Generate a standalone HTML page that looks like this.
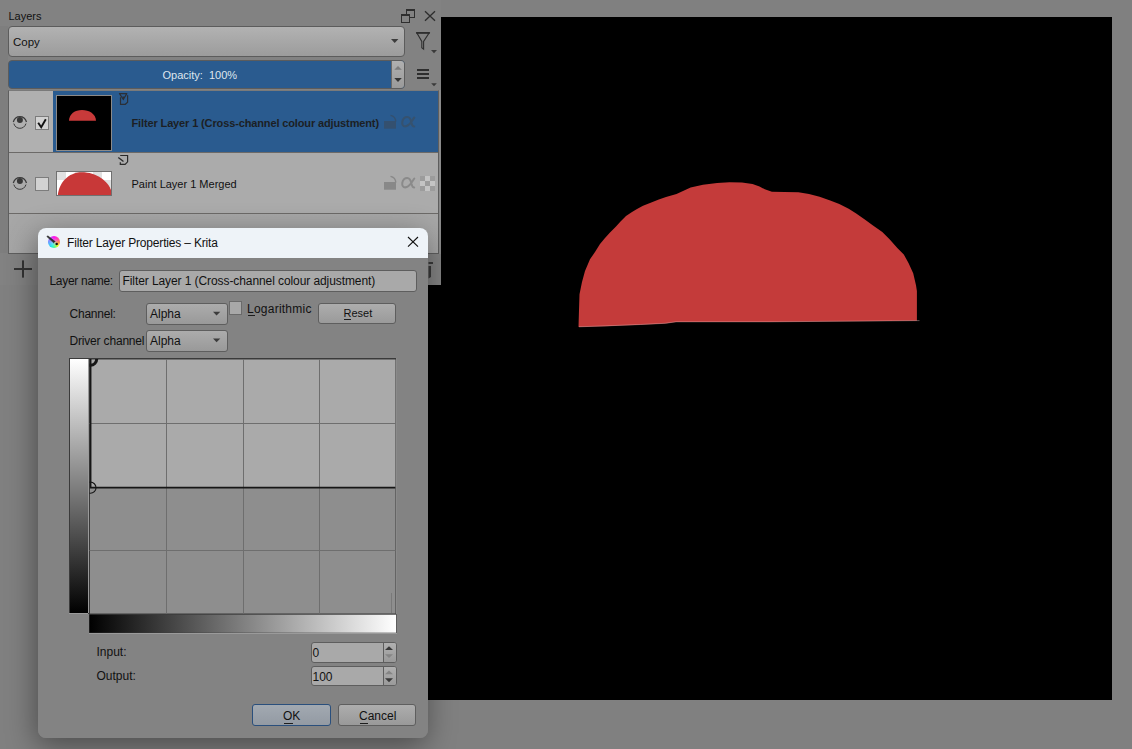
<!DOCTYPE html>
<html><head><meta charset="utf-8">
<style>
*{box-sizing:border-box;margin:0;padding:0}
html,body{width:1132px;height:749px;overflow:hidden;background:#808080;font-family:"Liberation Sans",sans-serif;font-size:12px;color:#111;position:relative}
.a{position:absolute}
.t{position:absolute;line-height:1;white-space:pre}
.s11{font-size:11px}
svg{position:absolute;overflow:visible}
</style></head><body>
<!-- canvas -->
<div class="a" style="left:420px;top:17px;width:692px;height:683px;background:#000"></div>
<svg style="left:0;top:0" width="1132" height="749" viewBox="0 0 1132 749">
<path fill="#c43b3a" d="M578.5,327.1 L579,310 L579.5,294.2 L582,282 L585,271 L590,259.2 L595,252.1 L600,244.1 L605,238.1 L610,232.5 L616,226.5 L621,221.1 L626,216.1 L632,212.1 L637,209.1 L643,205.7 L650,203 L658.8,199.4 L666,197 L676.5,194.1 L690.6,187.5 L703,184.7 L717.1,183 L729.5,182.2 L741.9,182.6 L752.5,184 L759.5,186.5 L764.8,189.3 L771.9,191.8 L784.3,192 L798.4,192.3 L809,194.1 L819.6,196.7 L830.2,200.6 L839.3,204 L848.7,208.7 L856.2,213.4 L865.5,219.9 L873,225.5 L882.3,232.1 L889.8,239.5 L897.3,247.9 L903.8,254.5 L908.5,262.9 L913.2,273.2 L916,285.3 L916.9,291 L916.9,320.8 L770,322.1 L676,322.1 L665.4,323.6 L640.7,324.8 L605.3,326.2 Z"/>
<path fill="none" stroke="rgba(235,200,200,.55)" stroke-width=".7" d="M579,326.8 L605.3,325.9 L640.7,324.5 L665.4,323.3 L676,321.8 L770,321.8 L919.5,320.6"/>
</svg>

<!-- ============ LAYERS DOCKER ============ -->
<div class="a" style="left:0;top:0;width:441px;height:285px;background:#828282"></div>
<div class="a" style="left:439px;top:90px;width:2px;height:164px;background:#8a8a8a"></div>
<div class="a" style="left:0;top:26px;width:8px;height:227px;background:#7e7e7e"></div>
<div class="t s11" style="left:8.5px;top:10.7px">Layers</div>
<!-- float / close -->
<svg style="left:0;top:0" width="441" height="60">
 <g fill="none" stroke="#2e2e2e" stroke-width="1">
  <rect x="406.5" y="9.5" width="8" height="8"/>
  <rect x="401.5" y="14.5" width="8" height="8" fill="#828282"/>
 </g>
 <rect x="406" y="9" width="9" height="2" fill="#2e2e2e"/>
 <rect x="401" y="14" width="9" height="2" fill="#2e2e2e"/>
 <path d="M425,11.2 L435,20.8 M435,11.2 L425,20.8" stroke="#2e2e2e" stroke-width="1.3"/>
 <!-- funnel -->
 <path d="M416.8,32.8 L429.2,32.8 L423.6,41.5 L423.6,49.2 L421.8,47.8 L421.8,41.5 Z" fill="none" stroke="#2e2e2e" stroke-width="1.1" stroke-linejoin="miter"/>
 <rect x="416.2" y="32" width="13.6" height="1.8" fill="#2e2e2e"/>
 <path d="M431,50 L437,50 L434,53.3 Z" fill="#3a3a3a"/>
</svg>
<!-- composite combobox -->
<div class="a" style="left:8px;top:26px;width:397px;height:31px;border:1px solid #5c5c5c;border-radius:4px;background:linear-gradient(#b2b2b2,#9c9c9c)"></div>
<div class="t" style="left:13px;top:37px;font-size:11.5px">Copy</div>
<svg style="left:0;top:0" width="441" height="60"><path d="M391,39 L398.4,39 L394.7,43 Z" fill="#3c3c3c"/></svg>
<!-- opacity slider -->
<div class="a" style="left:8px;top:60px;width:397px;height:29px;border:1px solid #5c5c5c;border-radius:4px;background:#2a5b8f;overflow:hidden">
  <div class="a" style="left:382px;top:0;width:14px;height:27px;background:linear-gradient(#b0b0b0,#9a9a9a);border-left:1px solid #6a6a6a"></div>
</div>
<div class="t s11" style="left:162.5px;top:69.7px;color:#dfe6ee">Opacity:  100%</div>
<svg style="left:0;top:0" width="441" height="100">
 <path d="M394.3,69.7 L401.8,69.7 L398,66 Z" fill="#7c7c7c"/>
 <path d="M394.3,78 L401.8,78 L398,82 Z" fill="#353535"/>
 <rect x="417" y="69" width="12" height="2" fill="#2e2e2e"/>
 <rect x="417" y="73" width="12" height="2" fill="#2e2e2e"/>
 <rect x="417" y="77" width="12" height="2" fill="#2e2e2e"/>
 <path d="M431.2,83.2 L436.8,83.2 L434,86.3 Z" fill="#3a3a3a"/>
</svg>
<!-- layer list -->
<div class="a" style="left:8px;top:90px;width:431px;height:164px;border:1px solid #5e5e5e;border-top-color:#7a7a7a;background:#aaaaaa"></div>
<div class="a" style="left:9px;top:91px;width:429px;height:162px;background:linear-gradient(#ababab,#a6a6a6)"></div>
<!-- row 1 -->
<div class="a" style="left:9px;top:91px;width:44px;height:61px;background:#b0b0b0"></div>
<div class="a" style="left:53px;top:91px;width:385px;height:61px;background:#2a5b8f"></div>
<div class="a" style="left:9px;top:152px;width:429px;height:1px;background:#6c6a68"></div>
<!-- row 2 -->
<div class="a" style="left:9px;top:153px;width:429px;height:60px;background:#ababab"></div>
<div class="a" style="left:9px;top:213px;width:429px;height:1px;background:#6c6a68"></div>
<!-- eye icons -->
<svg style="left:0;top:0" width="441" height="260">
 <g><path d="M13.3,122 C14.5,118 17,116.6 19.9,116.6 C22.8,116.6 25.3,118 26.5,122" fill="none" stroke="#3a3a3a" stroke-width="1.25"/>
  <circle cx="19.9" cy="120" r="3" fill="#383838"/>
  <path d="M13.8,123.6 C15,127 17.3,128.3 19.9,128.3 C22.5,128.3 24.8,127 26,123.6" fill="none" stroke="#3a3a3a" stroke-width="1"/></g>
 <g transform="translate(0,61)"><path d="M13.3,122 C14.5,118 17,116.6 19.9,116.6 C22.8,116.6 25.3,118 26.5,122" fill="none" stroke="#3a3a3a" stroke-width="1.25"/>
  <circle cx="19.9" cy="120" r="3" fill="#383838"/>
  <path d="M13.8,123.6 C15,127 17.3,128.3 19.9,128.3 C22.5,128.3 24.8,127 26,123.6" fill="none" stroke="#3a3a3a" stroke-width="1"/></g>
 <!-- checkboxes -->
 <rect x="35.5" y="116.5" width="13" height="13" fill="#d2d2d2" stroke="#7c7c7c" stroke-width="1"/>
 <path d="M38.2,122.8 L41.2,127.2 L45.8,119.3" fill="none" stroke="#111" stroke-width="1.9" stroke-linejoin="miter"/>
 <rect x="35.5" y="177.5" width="13" height="13" fill="#d2d2d2" stroke="#7c7c7c" stroke-width="1"/>
 <!-- thumbnail 1 -->
 <rect x="56.5" y="95.5" width="55" height="55" fill="#000" stroke="#8c8a88" stroke-width="1"/>
 <path d="M69,120.8 C69,114 75,110 82,110 C89,110 96,114 96,120.8 Z" fill="#c83a3a"/>
 <!-- thumbnail 2 -->
 <rect x="56.5" y="171.5" width="55" height="24" fill="#fff" stroke="#707070" stroke-width="1"/>
 <rect x="57" y="172" width="9" height="8" fill="#e0e0e0"/>
 <rect x="75" y="172" width="9" height="8" fill="#e0e0e0"/>
 <rect x="93" y="172" width="9" height="8" fill="#e0e0e0"/>
 <rect x="66" y="180" width="9" height="8" fill="#e0e0e0"/>
 <rect x="84" y="180" width="9" height="8" fill="#e0e0e0"/>
 <rect x="102" y="180" width="9" height="8" fill="#e0e0e0"/>
 <path d="M57.8,195 C59,183 68,172.2 82,172.2 C96,172.2 108,181 111,190 L111,195 Z" fill="#c83838"/>
 <!-- filter layer icon -->
 <g fill="none" stroke="#2b2f36" stroke-width="1.2">
  <path d="M119.5,93.6 L126.8,93.6 L123.3,99.5 Z" stroke-linejoin="round"/>
  <path d="M120.5,97.2 L120.5,104.3 L125.3,104.3 L127.6,102.3 L127.6,95.3"/>
 </g>
 <path d="M122.3,96.5 L124.3,96.5 L123.3,100.5 Z" fill="#2b2f36"/>
 <!-- paint layer icon -->
 <g fill="none" stroke="#2a2a2a" stroke-width="1.2">
  <path d="M120.2,155.5 L127.6,155.5 L127.6,161.8 L125.1,164.3 L120.3,164.3 L120.3,162.2"/>
  <path d="M118.3,157.4 L123.5,161.5" stroke-width="1.3"/>
 </g>
 <!-- row1 lock/alpha (dimmed on blue) -->
 <g fill="#34506f">
  <rect x="384" y="121" width="12" height="7.7"/>
  <path d="M390.5,115.4 C393.5,116 395.6,118 395.8,121.5" fill="none" stroke="#34506f" stroke-width="1.4"/>
 </g>
 <path d="M414.3,117.5 C412,120.5 410.5,125 406,126.3 C403,126.8 401.8,124.5 402.3,121.8 C402.8,119 404.8,117 407.3,117 C410.5,117 411,121 411.5,123 C412,125 412.8,126.5 414.2,126.5" fill="none" stroke="#36526f" stroke-width="2.1" stroke-linecap="round"/>
 <!-- row2 lock/alpha/checker -->
 <g fill="#888">
  <rect x="384" y="182" width="12" height="7.7"/>
  <path d="M390.5,176.4 C393.5,177 395.6,179 395.8,182.5" fill="none" stroke="#888" stroke-width="1.4"/>
 </g>
 <path d="M414.3,178.5 C412,181.5 410.5,186 406,187.3 C403,187.8 401.8,185.5 402.3,182.8 C402.8,180 404.8,178 407.3,178 C410.5,178 411,182 411.5,184 C412,186 412.8,187.5 414.2,187.5" fill="none" stroke="#8a8a8a" stroke-width="2" stroke-linecap="round"/>
 <g>
  <rect x="420" y="176" width="15" height="15" fill="#c4c4c4"/>
  <rect x="420" y="176" width="5" height="5" fill="#9c9c9c"/>
  <rect x="430" y="176" width="5" height="5" fill="#9c9c9c"/>
  <rect x="425" y="181" width="5" height="5" fill="#9c9c9c"/>
  <rect x="420" y="186" width="5" height="5" fill="#9c9c9c"/>
  <rect x="430" y="186" width="5" height="5" fill="#9c9c9c"/>
 </g>
 <!-- footer + -->
 <rect x="22" y="260.4" width="2" height="17.2" fill="#333"/>
 <rect x="14" y="268" width="18" height="2" fill="#333"/>
 <!-- footer right partial icon -->
 <rect x="428.5" y="262" width="4.5" height="2" fill="#3a3a3a"/>
 <path d="M428.5,266 L431,266 L431,277 L428.5,278.6 Z" fill="#3a3a3a"/>
</svg>
<div class="t s11" style="left:131.5px;top:117.7px;font-weight:bold;letter-spacing:-0.13px;color:#1c1f24">Filter Layer 1 (Cross-channel colour adjustment)</div>
<div class="t s11" style="left:131.5px;top:178.7px">Paint Layer 1 Merged</div>

<!-- ============ DIALOG ============ -->
<div class="a" style="left:38px;top:228px;width:390px;height:510px;border-radius:8px;box-shadow:-2px 8px 30px rgba(0,0,0,.42)"></div>
<div class="a" style="left:38px;top:228px;width:390px;height:510px;background:#838383;border-radius:8px"></div>
<div class="a" style="left:38px;top:228px;width:390px;height:30px;background:#eef3f8;border-radius:8px 8px 0 0"></div>
<svg style="left:0;top:0" width="440" height="749">
 <defs>
  <linearGradient id="kg" x1="0" y1="0" x2="1" y2="1">
   <stop offset="0" stop-color="#ff3cf0"/><stop offset=".5" stop-color="#8a7dff"/><stop offset="1" stop-color="#30e0a0"/>
  </linearGradient>
  <linearGradient id="vg" x1="0" y1="0" x2="0" y2="1"><stop offset="0" stop-color="#fff"/><stop offset="1" stop-color="#000"/></linearGradient>
  <linearGradient id="hg" x1="0" y1="0" x2="1" y2="0"><stop offset="0" stop-color="#000"/><stop offset="1" stop-color="#fff"/></linearGradient>
 </defs>
 <!-- krita icon -->
 <!-- close X -->
 <path d="M408,237 L418,246.6 M418,237 L408,246.6" stroke="#111" stroke-width="1.1"/>
</svg>
<div class="a" style="left:47.6px;top:235.5px;width:12.8px;height:12.8px;border-radius:50%;background:radial-gradient(circle at 45% 55%,rgba(200,240,255,.55),rgba(255,255,255,0) 55%),conic-gradient(from 0deg,#ff10f0,#ff50a0 60deg,#ff9a40 100deg,#f0ff20 135deg,#60ff70 165deg,#10f0e0 205deg,#40b0ff 250deg,#a070ff 300deg,#ff10f0)"></div>
<svg style="left:0;top:0" width="100" height="260">
 <path d="M46.9,236.6 L47.7,235.8 L55.2,241.6 L53.9,243.1 Z" fill="#2c2c2c" stroke="#2c2c2c" stroke-width=".6" stroke-linejoin="round"/>
 <path d="M54.5,242.5 L55.8,243.5" stroke="#bbb" stroke-width="1.6"/>
 <circle cx="56.7" cy="244" r="1.25" fill="#111"/>
</svg>
<div class="t" style="left:67px;top:236.6px;letter-spacing:-0.17px;color:#111">Filter Layer Properties – Krita</div>

<!-- layer name -->
<div class="t" style="left:49.5px;top:274.6px;letter-spacing:-0.3px">Layer name:</div>
<div class="a" style="left:119px;top:269.5px;width:297.5px;height:22px;border:1px solid #5e5e5e;border-radius:3px;background:#a9a9a9"></div>
<div class="t" style="left:122.5px;top:274.6px;letter-spacing:-0.085px">Filter Layer 1 (Cross-channel colour adjustment)</div>

<!-- channel row -->
<div class="t" style="left:69.5px;top:307.8px;letter-spacing:-0.23px">Channel:</div>
<div class="a" style="left:145.5px;top:302.5px;width:82px;height:22px;border:1px solid #5e5e5e;border-radius:3px;background:linear-gradient(#acacac,#999)"></div>
<div class="t" style="left:150px;top:307.8px">Alpha</div>
<div class="a" style="left:228.7px;top:301.4px;width:13px;height:13.4px;border:1px solid #6a6a6a;background:#a8a8a8"></div>
<div class="t" style="left:247px;top:302.9px;letter-spacing:0.24px">Logarithmic</div>
<div class="a" style="left:247.5px;top:314.5px;width:7px;height:1px;background:#1e1e1e"></div>
<div class="a" style="left:317.7px;top:302.6px;width:78.5px;height:21.3px;border:1px solid #5e5e5e;border-radius:3px;background:linear-gradient(#adadad,#9a9a9a)"></div>
<div class="t s11" style="left:343.5px;top:308.4px">Reset</div>
<div class="a" style="left:344px;top:319.2px;width:7px;height:1px;background:#1e1e1e"></div>

<!-- driver channel row -->
<div class="t" style="left:69.5px;top:335px;letter-spacing:-0.18px">Driver channel</div>
<div class="a" style="left:145.5px;top:329.7px;width:82px;height:22px;border:1px solid #5e5e5e;border-radius:3px;background:linear-gradient(#acacac,#999)"></div>
<div class="t" style="left:150px;top:335px">Alpha</div>
<svg style="left:0;top:0" width="440" height="749">
 <path d="M213,311.7 L220.3,311.7 L216.6,315.5 Z" fill="#3c3c3c"/>
 <path d="M213,338.5 L220.3,338.5 L216.6,342.3 Z" fill="#3c3c3c"/>
 <!-- curve widget -->
 <rect x="69" y="358" width="19" height="256" fill="#3a3a3a"/>
 <rect x="70" y="359" width="18" height="254" fill="url(#vg)"/>
 <rect x="69" y="613" width="19" height="1" fill="#9a9a9a"/>
 <rect x="88" y="358" width="308.5" height="256" fill="#3a3a3a"/><rect x="88" y="359" width="1" height="254" fill="#9a9a9a"/>
 <rect x="90" y="359.5" width="305.5" height="128" fill="#aaaaaa"/>
 <rect x="90" y="487.5" width="305.5" height="126" fill="#8e8e8e"/>
 <rect x="396" y="358" width="1" height="256" fill="#8a8a8a"/>
 <g stroke="#6e6e6e" stroke-width="1">
  <line x1="166.5" y1="359" x2="166.5" y2="613.5"/>
  <line x1="243.5" y1="359" x2="243.5" y2="613.5"/>
  <line x1="319.5" y1="359" x2="319.5" y2="613.5"/>
  <line x1="89.5" y1="423.5" x2="395.5" y2="423.5"/>
  <line x1="89.5" y1="550.5" x2="395.5" y2="550.5"/>
 </g>
 <line x1="391.5" y1="593" x2="391.5" y2="613" stroke="#747474" stroke-width="0.8"/>
 <clipPath id="cw"><rect x="89.5" y="359" width="306" height="255"/></clipPath>
 <g clip-path="url(#cw)" fill="none" stroke="#161616">
  <path d="M90.6,359 L90.6,487.7 L395.5,487.7" stroke-width="1.7"/>
  <circle cx="90.4" cy="359" r="6.3" stroke-width="3"/>
  <circle cx="90.4" cy="487.7" r="5.6" stroke-width="1.1"/>
 </g>
 <rect x="89" y="614" width="307.5" height="19" fill="#3a3a3a"/>
 <rect x="89.5" y="614.7" width="306.5" height="18" fill="url(#hg)"/>
 <rect x="89" y="633" width="308" height="1" fill="#9a9a9a"/>
</svg>

<!-- input / output -->
<div class="t" style="left:96.5px;top:645.7px">Input:</div>
<div class="t" style="left:96.5px;top:669.6px">Output:</div>
<div class="a" style="left:310.5px;top:641.6px;width:86px;height:21px;border:1px solid #5e5e5e;border-radius:3px;background:#a9a9a9;overflow:hidden">
 <div class="a" style="left:71px;top:0;width:14px;height:19px;border-left:1px solid #5e5e5e;background:linear-gradient(#b0b0b0,#999)"></div>
</div>
<div class="a" style="left:310.5px;top:665.9px;width:86px;height:20.5px;border:1px solid #5e5e5e;border-radius:3px;background:#a9a9a9;overflow:hidden">
 <div class="a" style="left:71px;top:0;width:14px;height:19px;border-left:1px solid #5e5e5e;background:linear-gradient(#b0b0b0,#999)"></div>
</div>
<div class="t" style="left:312.5px;top:646.7px">0</div>
<div class="t" style="left:312.5px;top:670.5px">100</div>
<svg style="left:0;top:0" width="440" height="749">
 <path d="M385,650 L393,650 L389,646.2 Z" fill="#3a3a3a"/>
 <path d="M385,654.2 L393,654.2 L389,658.1 Z" fill="#858585"/>
 <path d="M385,674.2 L393,674.2 L389,670.4 Z" fill="#858585"/>
 <path d="M385,678.3 L393,678.3 L389,682.2 Z" fill="#3a3a3a"/>
</svg>

<!-- OK / Cancel -->
<div class="a" style="left:251.5px;top:704.2px;width:79px;height:22.2px;border:1px solid #2a4f7c;border-radius:3px;background:linear-gradient(#a2a9b1,#939aa3)"></div>
<div class="t" style="left:283px;top:709.8px">OK</div>
<div class="a" style="left:283.5px;top:722.5px;width:9px;height:1px;background:#1e1e1e"></div>
<div class="a" style="left:337.7px;top:704.2px;width:78.6px;height:22.2px;border:1px solid #5e5e5e;border-radius:3px;background:linear-gradient(#adadad,#999)"></div>
<div class="t" style="left:359px;top:709.8px">Cancel</div>
<div class="a" style="left:359.5px;top:722.5px;width:8px;height:1px;background:#1e1e1e"></div>
</body></html>
